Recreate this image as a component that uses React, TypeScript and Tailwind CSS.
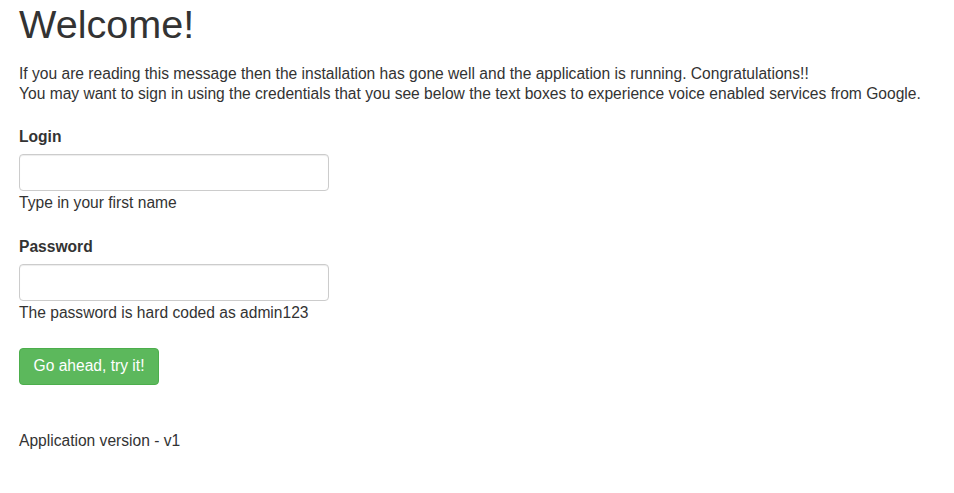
export default function App() {
  return (
    <div className="min-h-screen bg-white px-[19px] font-['Liberation_Sans',Arial,sans-serif] text-[15.6px] leading-[22px] text-[#333]">
      <h1 className="pt-[3px] text-[39.6px] leading-[43.6px] font-normal">Welcome!</h1>
      <p className="mt-[17px] leading-[20px]">
        If you are reading this message then the installation has gone well and the application is running. Congratulations!!
        <br />
        You may want to sign in using the credentials that you see below the text boxes to experience voice enabled services from Google.
      </p>

      <form className="mt-[22px] w-[310px]" onSubmit={(e) => e.preventDefault()}>
        <div className="mb-[22px]">
          <label className="block font-bold mb-[6px]">Login</label>
          <input
            type="text"
            className="block h-[37px] w-full rounded-[4px] border border-[#ccc] px-3 shadow-[inset_0_1px_1px_rgba(0,0,0,0.075)] outline-none"
          />
          <span className="block mt-[1px]">Type in your first name</span>
        </div>
        <div className="mb-[24px]">
          <label className="block font-bold mb-[6px]">Password</label>
          <input
            type="password"
            className="block h-[37px] w-full rounded-[4px] border border-[#ccc] px-3 shadow-[inset_0_1px_1px_rgba(0,0,0,0.075)] outline-none"
          />
          <span className="block mt-[1px]">The password is hard coded as admin123</span>
        </div>
        <button
          type="submit"
          className="h-[37px] w-[140px] rounded-[4px] border border-[#4cae4c] bg-[#5cb85c] text-white"
        >
          Go ahead, try it!
        </button>
      </form>

      <p className="mt-[45px]">Application version - v1</p>
    </div>
  );
}
